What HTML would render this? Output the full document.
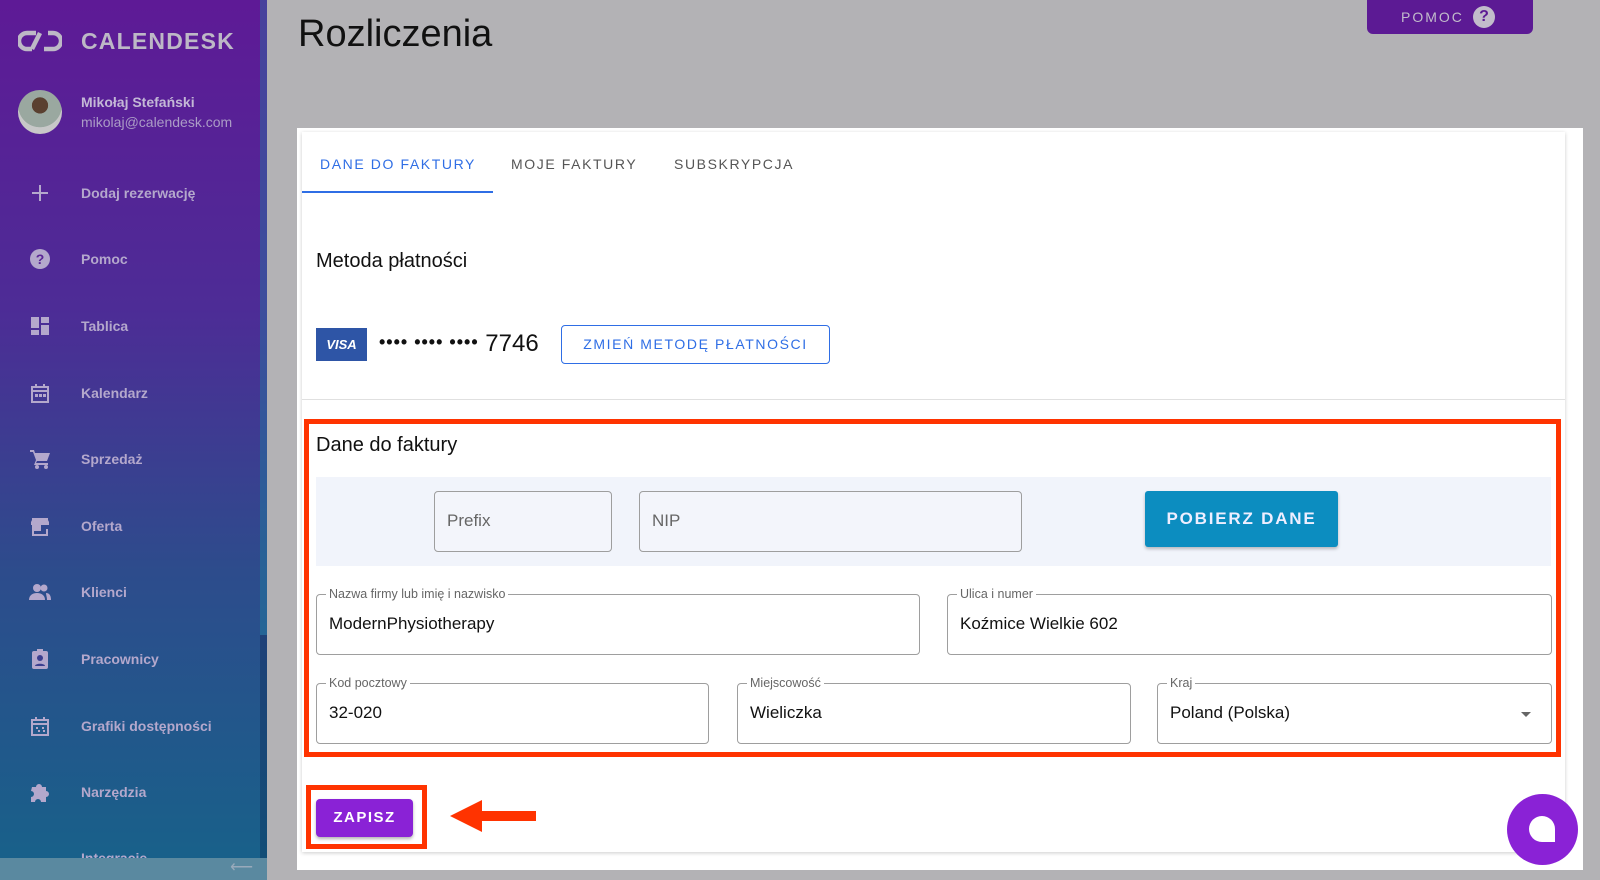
<!DOCTYPE html>
<html><head><meta charset="utf-8"><style>
*{box-sizing:border-box;margin:0;padding:0}
body{width:1600px;height:880px;overflow:hidden;background:#b3b2b5;font-family:"Liberation Sans",Roboto,sans-serif;position:relative}
.sb{position:absolute;left:0;top:0;width:267px;height:880px;background:linear-gradient(180deg,#5e1a96 0%,#4d2c96 35%,#2d4c8c 65%,#17628a 100%)}
.sb .scroll{position:absolute;right:0;top:0;width:7px;height:635px;background:rgba(30,140,170,.35)}
.sb .scroll2{position:absolute;right:0;top:635px;width:7px;height:223px;background:rgba(0,20,60,.25)}
.logo{position:absolute;left:81px;top:28px;font-weight:bold;font-size:23px;color:#bdb8c6;letter-spacing:1.2px}
.av{position:absolute;left:18px;top:90px;width:44px;height:44px;border-radius:50%;background:radial-gradient(circle at 50% 35%,#5a4030 0 22%,#9aa8a0 23% 60%,#c8c8c8 61%)}
.nm{position:absolute;left:81px;color:#c3b8d6;font-size:14px}
.it{position:absolute;left:81px;color:#b4a8cc;font-size:14px;font-weight:600}
.ic{position:absolute;left:29px;width:22px;height:22px}
.bot{position:absolute;left:0;top:858px;width:267px;height:22px;background:#5a89a0;color:#9ab;font-size:16px;text-align:right;padding-right:14px;line-height:20px;z-index:2}
h1{position:absolute;left:298px;top:13px;font-weight:normal;font-size:38px;color:#111}
.pomoc{position:absolute;left:1367px;top:0;width:166px;height:34px;background:#5c1a94;border-radius:0 0 6px 6px;color:#c2bccb;font-size:14px;letter-spacing:2px;line-height:34px;padding-left:34px}
.pomoc span{position:absolute;left:106px;top:6px;width:22px;height:22px;border-radius:50%;background:#c2bccb;color:#5c1a94;font-weight:bold;text-align:center;line-height:22px;letter-spacing:0;font-size:16px}
.outer{position:absolute;left:297px;top:128px;width:1286px;height:742px;background:#fff}
.card{position:absolute;left:302px;top:132px;width:1263px;height:720px;background:#fff;box-shadow:0 1px 4px rgba(0,0,0,.2)}
.tab{position:absolute;top:156px;font-size:14px;letter-spacing:1.6px;color:#555}
.ul{position:absolute;left:302px;top:191px;width:191px;height:2px;background:#2f6ee5}
.h2{position:absolute;left:316px;font-size:20px;color:#111}
.visa{position:absolute;left:316px;top:328px;width:51px;height:33px;background:#2e55a6;color:#fff;font-weight:bold;font-style:italic;font-size:13px;text-align:center;line-height:33px}
.num{position:absolute;left:379px;top:330px;font-size:24px;color:#111}
.zm{position:absolute;left:561px;top:325px;width:269px;height:39px;border:1px solid #2f6ee5;border-radius:4px;color:#2f6ee5;font-size:14px;letter-spacing:1.6px;text-align:center;line-height:37px}
.div{position:absolute;left:302px;top:399px;width:1263px;height:1px;background:#e0e0e0}
.red{position:absolute;left:304px;top:419px;width:1257px;height:338px;border:5px solid #ff3300}
.band{position:absolute;left:316px;top:477px;width:1235px;height:89px;background:#f1f4fb}
.in{position:absolute;border:1px solid #9e9e9e;border-radius:4px;font-size:17px;color:#111;padding-left:12px;line-height:58px}
.in.g{color:#666;background:#f3f5fb}
.in label{position:absolute;left:9px;top:-9px;font-size:12.5px;color:#666;background:#fff;padding:0 3px;line-height:16px}
.pob{position:absolute;left:1145px;top:491px;width:193px;height:56px;background:#0c8dc0;border-radius:3px;color:#eef;font-size:17px;letter-spacing:1.8px;font-weight:bold;text-align:center;line-height:56px;box-shadow:0 2px 3px rgba(0,0,0,.25)}
.rz{position:absolute;left:306px;top:785px;width:121px;height:64px;border:5px solid #ff3300}
.zap{position:absolute;left:316px;top:799px;width:97px;height:38px;background:#8a22d6;border-radius:4px;color:#fff;font-weight:bold;font-size:15px;letter-spacing:1.5px;text-align:center;line-height:38px;box-shadow:0 2px 3px rgba(0,0,0,.3)}
.chat{position:absolute;left:1507px;top:794px;width:71px;height:71px;border-radius:50%;background:#8a22d6}
.chat i{position:absolute;left:22px;top:22px;width:26px;height:26px;background:#fff;border-radius:50% 50% 0 50%}
</style></head><body>
<div class="sb">
<div class="scroll"></div><div class="scroll2"></div>
<svg style="position:absolute;left:18px;top:30px" width="44" height="22" viewBox="0 0 44 22"><path d="M18 3H9a8 8 0 0 0 0 16h5M26 19h9a8 8 0 0 0 0-16h-5M14 19L22 3" fill="none" stroke="#bdb8c6" stroke-width="4.5"/></svg>
<div class="logo">CALENDESK</div>
<div class="av"></div>
<div class="nm" style="top:94px;font-weight:600">Mikołaj Stefański</div>
<div class="nm" style="top:114px;color:#ab9cc6">mikolaj@calendesk.com</div>
<svg class="ic" style="top:182px" viewBox="0 0 22 22"><path d="M11 3v16M3 11h16" stroke="#b4a8cc" stroke-width="2"/></svg>
<div class="it" style="top:185px">Dodaj rezerwację</div>
<svg class="ic" style="top:248px" viewBox="0 0 22 22"><circle cx="11" cy="11" r="10" fill="#b4a8cc"/><text x="11" y="16" font-size="14" font-weight="bold" text-anchor="middle" fill="#5a2596" font-family="Liberation Sans">?</text></svg>
<div class="it" style="top:251px">Pomoc</div>
<svg class="ic" style="top:315px" viewBox="0 0 22 22"><path fill="#b4a8cc" d="M2 2h8v11H2zM12 2h8v6h-8zM12 10h8v10h-8zM2 15h8v5H2z"/></svg>
<div class="it" style="top:318px">Tablica</div>
<svg class="ic" style="top:382px" viewBox="0 0 22 22"><path fill="none" stroke="#b4a8cc" stroke-width="2" d="M3 5h16v15H3zM3 9h16M7 2v4M15 2v4"/><path fill="#b4a8cc" d="M6 12h3v3H6zM10 12h3v3h-3zM14 12h3v3h-3z"/></svg>
<div class="it" style="top:385px">Kalendarz</div>
<svg class="ic" style="top:448px" viewBox="0 0 22 22"><path fill="#b4a8cc" d="M1 2h4l1 3h15l-3 8H8l-1 2h12v2H5l2-5L4 4H1z"/><circle cx="8" cy="19" r="2" fill="#b4a8cc"/><circle cx="17" cy="19" r="2" fill="#b4a8cc"/></svg>
<div class="it" style="top:451px">Sprzedaż</div>
<svg class="ic" style="top:515px" viewBox="0 0 22 22"><path fill="#b4a8cc" d="M3 3h16v2H3zM2 7l1-2h16l1 2v3H2zM3 10h2v9h12v-5h2v7H3zm2 0h7v6H5z"/></svg>
<div class="it" style="top:518px">Oferta</div>
<svg class="ic" style="top:581px" viewBox="0 0 22 22"><circle cx="8" cy="7" r="4" fill="#b4a8cc"/><circle cx="15" cy="7" r="3.5" fill="#b4a8cc"/><path fill="#b4a8cc" d="M0 19c0-5 4-7 8-7s8 2 8 7zM17 12c3 0 5 2 5 7h-4c0-3-1-5-1-7z"/></svg>
<div class="it" style="top:584px">Klienci</div>
<svg class="ic" style="top:648px" viewBox="0 0 22 22"><rect x="3" y="3" width="16" height="18" rx="2" fill="#b4a8cc"/><circle cx="11" cy="10" r="3" fill="#3b3f8f"/><path d="M6 18c0-3 10-3 10 0z" fill="#3b3f8f"/><rect x="8" y="1" width="6" height="3" fill="#b4a8cc"/></svg>
<div class="it" style="top:651px">Pracownicy</div>
<svg class="ic" style="top:715px" viewBox="0 0 22 22"><path fill="none" stroke="#b4a8cc" stroke-width="2" d="M3 5h16v15H3zM3 9h16M7 2v4M15 2v4"/><path fill="#b4a8cc" d="M7 12h2v2H7zM13 12h2v2h-2zM9 15h2v2H9zM14 15h2v2h-2z"/></svg>
<div class="it" style="top:718px">Grafiki dostępności</div>
<svg class="ic" style="top:781px" viewBox="0 0 22 22"><path fill="#b4a8cc" d="M3 6h4a3 3 0 0 1 6 0h4v4a3 3 0 0 1 0 6v5h-5a3 3 0 0 0-6 0H2v-5a3 3 0 0 0 0-6z"/></svg>
<div class="it" style="top:784px">Narzędzia</div>
<div class="it" style="top:850px">Integracje</div>
<div class="bot">⟵</div>
</div>
<h1>Rozliczenia</h1>
<div class="pomoc">POMOC<span>?</span></div>
<div class="outer"></div>
<div class="card"></div>
<div class="tab" style="left:320px;color:#2f6ee5">DANE DO FAKTURY</div>
<div class="tab" style="left:511px">MOJE FAKTURY</div>
<div class="tab" style="left:674px">SUBSKRYPCJA</div>
<div class="ul"></div>
<div class="h2" style="top:250px">Metoda płatności</div>
<div class="visa">VISA</div>
<div class="num"><span style="font-size:18px;font-weight:bold;letter-spacing:1px;vertical-align:3px">•••• •••• ••••</span> 7746</div>
<div class="zm">ZMIEŃ METODĘ PŁATNOŚCI</div>
<div class="div"></div>
<div class="h2" style="top:434px">Dane do faktury</div>
<div class="band"></div>
<div class="in g" style="left:434px;top:491px;width:178px;height:61px">Prefix</div>
<div class="in g" style="left:639px;top:491px;width:383px;height:61px">NIP</div>
<div class="pob">POBIERZ DANE</div>
<div class="in" style="left:316px;top:594px;width:604px;height:61px"><label>Nazwa firmy lub imię i nazwisko</label>ModernPhysiotherapy</div>
<div class="in" style="left:947px;top:594px;width:605px;height:61px"><label>Ulica i numer</label>Koźmice Wielkie 602</div>
<div class="in" style="left:316px;top:683px;width:393px;height:61px"><label>Kod pocztowy</label>32-020</div>
<div class="in" style="left:737px;top:683px;width:394px;height:61px"><label>Miejscowość</label>Wieliczka</div>
<div class="in" style="left:1157px;top:683px;width:395px;height:61px"><label>Kraj</label>Poland (Polska)<span style="position:absolute;right:20px;top:28px;border:5px solid transparent;border-top:5px solid #666"></span></div>
<div class="red"></div>
<div class="rz"></div>
<div class="zap">ZAPISZ</div>
<svg style="position:absolute;left:450px;top:798px" width="88" height="36" viewBox="0 0 88 36"><path d="M0 18L32 2v11h54v10H32v11z" fill="#ff3300"/></svg>
<div class="chat"><i></i></div>
</body></html>
